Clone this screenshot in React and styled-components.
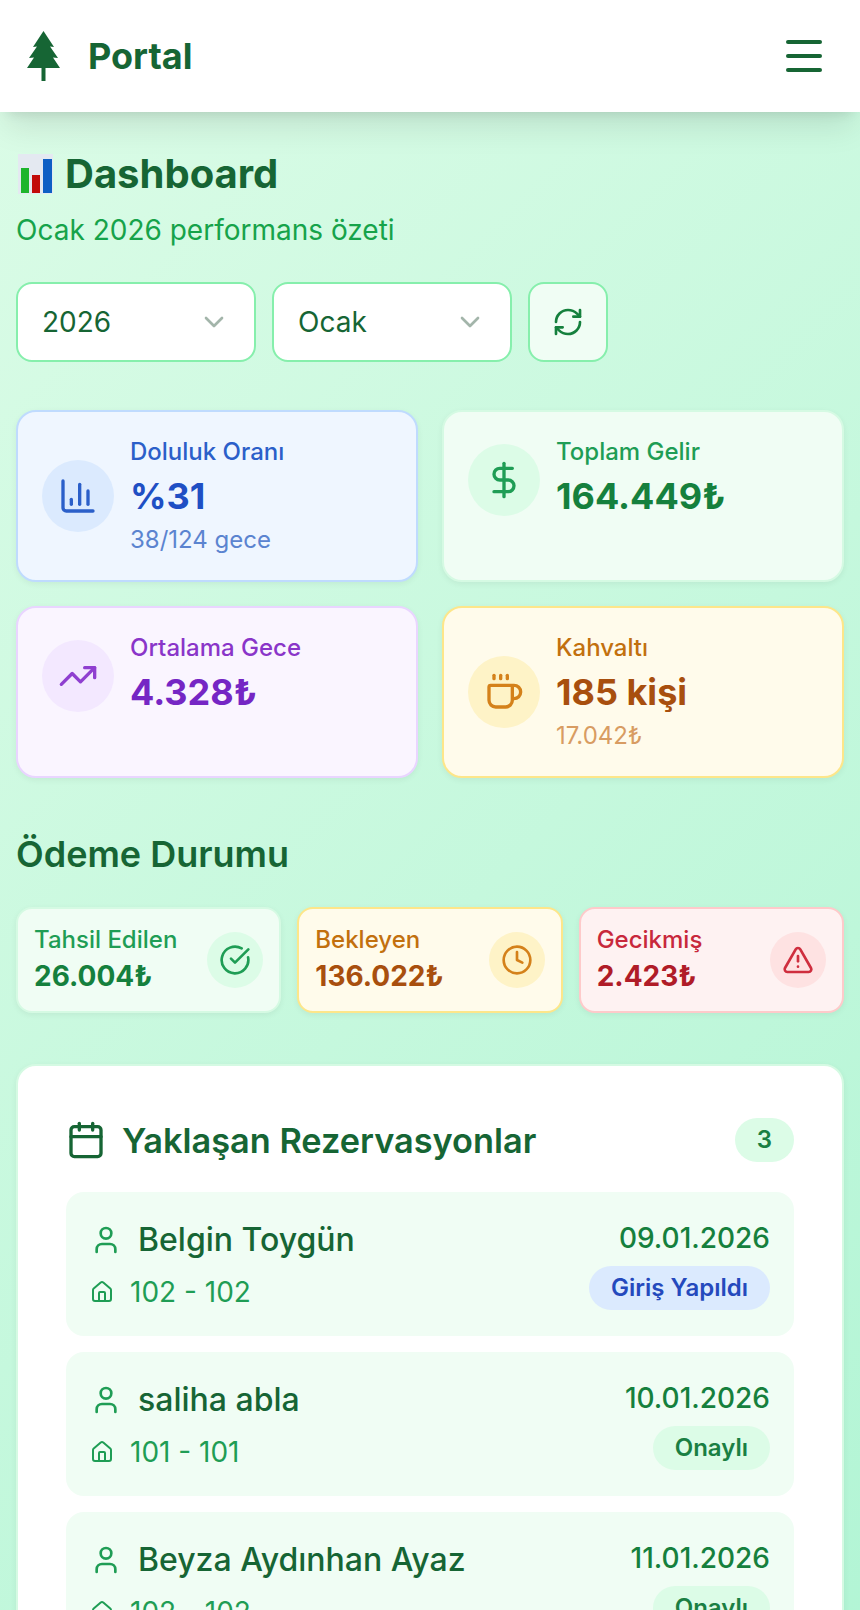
import React from 'react';
import styled, { createGlobalStyle } from 'styled-components';
import {
  Calendar,
  ChartColumn,
  ChevronDown,
  CircleCheckBig,
  Clock,
  Coffee,
  DollarSign,
  House,
  Menu,
  RefreshCw,
  TrendingUp,
  TriangleAlert,
  User,
} from 'lucide-react';

const tones = {
  blue: { bg: '#eff6ff', border: '#bfdbfe', circle: '#dbeafe', icon: '#2b5fc9', title: '#2b5fc9', value: '#1f4fc4', sub: '#5b84d0' },
  green: { bg: '#f0fdf4', border: '#d5fae3', circle: '#dcfce7', icon: '#1f9d55', title: '#1f9d55', value: '#15803d', sub: '#16a34a' },
  purple: { bg: '#faf5ff', border: '#e9d5ff', circle: '#f3e8ff', icon: '#8f3fd0', title: '#8a35c9', value: '#7526c4', sub: '#9333ea' },
  amber: { bg: '#fffbeb', border: '#fde68a', circle: '#fef3c7', icon: '#d4811a', title: '#c2700e', value: '#a84f0e', sub: '#d89c62' },
  red: { bg: '#fef2f2', border: '#fecaca', circle: '#fee2e2', icon: '#cf2e3e', title: '#c8283c', value: '#b01c28', sub: '#dc2626' },
};

const GlobalStyle = createGlobalStyle`
  html, body {
    margin: 0;
    padding: 0;
    height: 1610px;
    overflow: hidden;
  }
  body {
    font-family: Inter, "Liberation Sans", sans-serif;
    background: #d0fae0;
  }
  * {
    box-sizing: border-box;
  }
`;

const Page = styled.div`
  width: 860px;
  height: 1610px;
  overflow: hidden;
  background-image: linear-gradient(135deg, #dcfce7 0%, #a7f3d0 100%);
  background-size: 100% 2300px;
  background-repeat: no-repeat;
`;

const TopBar = styled.header`
  position: relative;
  height: 112px;
  padding: 0 32px 0 27px;
  display: flex;
  align-items: center;
  justify-content: space-between;
  background: #fff;
  box-shadow: 0 20px 30px -6px rgba(0, 0, 0, 0.1), 0 8px 12px -8px rgba(0, 0, 0, 0.12);
`;

const Brand = styled.div`
  display: flex;
  align-items: center;
  gap: 28px;
  font-size: 36px;
  font-weight: 700;
  color: #166534;
`;

const Main = styled.main`
  padding: 34px 16px 0;
`;

const PageTitle = styled.h1`
  margin: 0;
  display: flex;
  align-items: center;
  gap: 9px;
  font-size: 40px;
  line-height: 56px;
  font-weight: 700;
  color: #166534;
`;

const PageSubtitle = styled.p`
  margin: 8px 0 0;
  font-size: 28px;
  line-height: 40px;
  color: #16a34a;
`;

const Filters = styled.div`
  margin-top: 32px;
  display: flex;
  gap: 16px;
`;

const SelectBox = styled.div`
  width: 240px;
  height: 80px;
  padding: 0 24px;
  display: flex;
  align-items: center;
  justify-content: space-between;
  background: #fff;
  border: 2px solid #86efac;
  border-radius: 16px;
  font-size: 28px;
  color: #166534;

  svg {
    color: #a3b5aa;
  }
`;

const RefreshButton = styled.button`
  width: 80px;
  height: 80px;
  padding: 0;
  display: flex;
  align-items: center;
  justify-content: center;
  background: #f0fdf4;
  border: 2px solid #86efac;
  border-radius: 16px;
  color: #15803d;
`;

const StatGrid = styled.section`
  margin-top: 48px;
  display: grid;
  grid-template-columns: 1fr 1fr;
  gap: 24px;
`;

const StatCard = styled.div`
  padding: 24px;
  min-height: 172px;
  background: ${(props) => tones[props.$tone].bg};
  border: 2px solid ${(props) => tones[props.$tone].border};
  border-radius: 20px;
  box-shadow: 0 2px 6px rgba(0, 0, 0, 0.06);
`;

const StatRow = styled.div`
  display: flex;
  align-items: center;
  gap: 16px;
`;

const IconCircle = styled.div`
  flex: none;
  width: ${(props) => props.$size}px;
  height: ${(props) => props.$size}px;
  display: flex;
  align-items: center;
  justify-content: center;
  border-radius: 50%;
  background: ${(props) => tones[props.$tone].circle};
  color: ${(props) => tones[props.$tone].icon};
`;

const StatLabel = styled.div`
  font-size: 24px;
  line-height: 32px;
  font-weight: 500;
  color: ${(props) => tones[props.$tone].title};
`;

const StatValue = styled.div`
  font-size: 36px;
  line-height: 56px;
  font-weight: 700;
  color: ${(props) => tones[props.$tone].value};
`;

const StatSub = styled.div`
  font-size: 24px;
  line-height: 32px;
  color: ${(props) => tones[props.$tone].sub};
`;

const SectionTitle = styled.h2`
  margin: 48px 0 25px;
  font-size: 36px;
  line-height: 56px;
  font-weight: 600;
  color: #166534;
`;

const PaymentGrid = styled.section`
  display: grid;
  grid-template-columns: repeat(3, 1fr);
  gap: 16px;
`;

const PaymentCard = styled.div`
  padding: 15px 16px;
  display: flex;
  align-items: center;
  justify-content: space-between;
  background: ${(props) => tones[props.$tone].bg};
  border: 2px solid ${(props) => tones[props.$tone].border};
  border-radius: 16px;
  box-shadow: 0 2px 6px rgba(0, 0, 0, 0.06);
`;

const PaymentValue = styled.div`
  font-size: 28px;
  line-height: 40px;
  font-weight: 700;
  color: ${(props) => tones[props.$tone].value};
`;

const Panel = styled.section`
  margin-top: 51px;
  padding: 46px 48px;
  background: #fff;
  border: 2px solid #d5fae3;
  border-radius: 20px;
  box-shadow: 0 2px 6px rgba(0, 0, 0, 0.06);
`;

const PanelHeader = styled.div`
  margin-bottom: 24px;
  height: 56px;
  display: flex;
  align-items: center;
  justify-content: space-between;
`;

const PanelTitle = styled.h3`
  margin: 0;
  display: flex;
  align-items: center;
  gap: 16px;
  font-size: 34.3px;
  font-weight: 600;
  color: #166534;
`;

const Pill = styled.span`
  display: inline-block;
  padding: 0 22px;
  height: 44px;
  line-height: 44px;
  border-radius: 22px;
  font-size: 24px;
  font-weight: 600;
  background: ${(props) => (props.$blue ? '#dbeafe' : '#dcfce7')};
  color: ${(props) => (props.$blue ? '#2449bd' : '#1a7f43')};
`;

const BookingList = styled.div`
  display: flex;
  flex-direction: column;
  gap: 16px;
`;

const BookingItem = styled.div`
  padding: 24px;
  display: flex;
  justify-content: space-between;
  background: #f0fdf4;
  border-radius: 18px;
`;

const BookingMain = styled.div`
  display: flex;
  flex-direction: column;
  gap: 8px;
`;

const GuestRow = styled.div`
  display: flex;
  align-items: center;
  gap: 16px;
  font-size: 32px;
  line-height: 48px;
  font-weight: 500;
  color: #166534;

  svg {
    color: #1f9d55;
  }
`;

const RoomRow = styled.div`
  display: flex;
  align-items: center;
  gap: 16px;
  font-size: 28px;
  line-height: 40px;
  color: #1f9d55;
`;

const BookingSide = styled.div`
  display: flex;
  flex-direction: column;
  align-items: flex-end;
  gap: 6px;
`;

const BookingDate = styled.div`
  font-size: 28px;
  line-height: 44px;
  font-weight: 500;
  color: #15803d;
`;

const TreeLogo = () => (
  <svg width="33" height="50" viewBox="0 0 33 50" aria-hidden="true">
    <path
      fill="#166534"
      d="M16.5 0L27 16L23 15.5L31 27L26 26.5L33 37H18.5V50H14.5V37H0L7 26.5L2 27L10 15.5L6 16Z"
    />
  </svg>
);

const ChartEmoji = () => (
  <svg width="40" height="40" viewBox="0 0 40 40" aria-hidden="true">
    <rect x="2" y="0" width="35" height="40" fill="#e4e9f1" />
    <rect x="5" y="14" width="8" height="25" fill="#1db52c" />
    <rect x="16" y="21" width="8" height="18" fill="#c20a0a" />
    <rect x="27" y="5" width="9" height="34" fill="#0e5fc4" />
  </svg>
);

const stats = [
  { tone: 'blue', Icon: ChartColumn, label: 'Doluluk Oranı', value: '%31', sub: '38/124 gece' },
  { tone: 'green', Icon: DollarSign, label: 'Toplam Gelir', value: '164.449₺' },
  { tone: 'purple', Icon: TrendingUp, label: 'Ortalama Gece', value: '4.328₺' },
  { tone: 'amber', Icon: Coffee, label: 'Kahvaltı', value: '185 kişi', sub: '17.042₺' },
];

const payments = [
  { tone: 'green', Icon: CircleCheckBig, label: 'Tahsil Edilen', value: '26.004₺' },
  { tone: 'amber', Icon: Clock, label: 'Bekleyen', value: '136.022₺' },
  { tone: 'red', Icon: TriangleAlert, label: 'Gecikmiş', value: '2.423₺' },
];

const bookings = [
  { guest: 'Belgin Toygün', room: '102 - 102', date: '09.01.2026', status: 'Giriş Yapıldı', blue: true },
  { guest: 'saliha abla', room: '101 - 101', date: '10.01.2026', status: 'Onaylı' },
  { guest: 'Beyza Aydınhan Ayaz', room: '102 - 102', date: '11.01.2026', status: 'Onaylı' },
];

const App = () => {
  return (
    <React.Fragment>
      <GlobalStyle />
      <Page>
        <TopBar>
          <Brand>
            <TreeLogo />
            Portal
          </Brand>
          <Menu size={48} color="#166534" />
        </TopBar>

        <Main>
          <PageTitle>
            <ChartEmoji />
            Dashboard
          </PageTitle>
          <PageSubtitle>Ocak 2026 performans özeti</PageSubtitle>

          <Filters>
            <SelectBox>
              2026
              <ChevronDown size={32} />
            </SelectBox>
            <SelectBox>
              Ocak
              <ChevronDown size={32} />
            </SelectBox>
            <RefreshButton>
              <RefreshCw size={32} />
            </RefreshButton>
          </Filters>

          <StatGrid>
            {stats.map(({ tone, Icon, label, value, sub }) => (
              <StatCard key={label} $tone={tone}>
                <StatRow>
                  <IconCircle $tone={tone} $size={72}>
                    <Icon size={40} />
                  </IconCircle>
                  <div>
                    <StatLabel $tone={tone}>{label}</StatLabel>
                    <StatValue $tone={tone}>{value}</StatValue>
                    {sub && <StatSub $tone={tone}>{sub}</StatSub>}
                  </div>
                </StatRow>
              </StatCard>
            ))}
          </StatGrid>

          <SectionTitle>Ödeme Durumu</SectionTitle>
          <PaymentGrid>
            {payments.map(({ tone, Icon, label, value }) => (
              <PaymentCard key={label} $tone={tone}>
                <div>
                  <StatLabel $tone={tone}>{label}</StatLabel>
                  <PaymentValue $tone={tone}>{value}</PaymentValue>
                </div>
                <IconCircle $tone={tone} $size={56}>
                  <Icon size={32} />
                </IconCircle>
              </PaymentCard>
            ))}
          </PaymentGrid>

          <Panel>
            <PanelHeader>
              <PanelTitle>
                <Calendar size={40} />
                Yaklaşan Rezervasyonlar
              </PanelTitle>
              <Pill>3</Pill>
            </PanelHeader>
            <BookingList>
              {bookings.map((booking) => (
                <BookingItem key={booking.guest}>
                  <BookingMain>
                    <GuestRow>
                      <User size={32} />
                      {booking.guest}
                    </GuestRow>
                    <RoomRow>
                      <House size={24} />
                      {booking.room}
                    </RoomRow>
                  </BookingMain>
                  <BookingSide>
                    <BookingDate>{booking.date}</BookingDate>
                    <Pill $blue={booking.blue}>{booking.status}</Pill>
                  </BookingSide>
                </BookingItem>
              ))}
            </BookingList>
          </Panel>
        </Main>
      </Page>
    </React.Fragment>
  );
};

export default App;
